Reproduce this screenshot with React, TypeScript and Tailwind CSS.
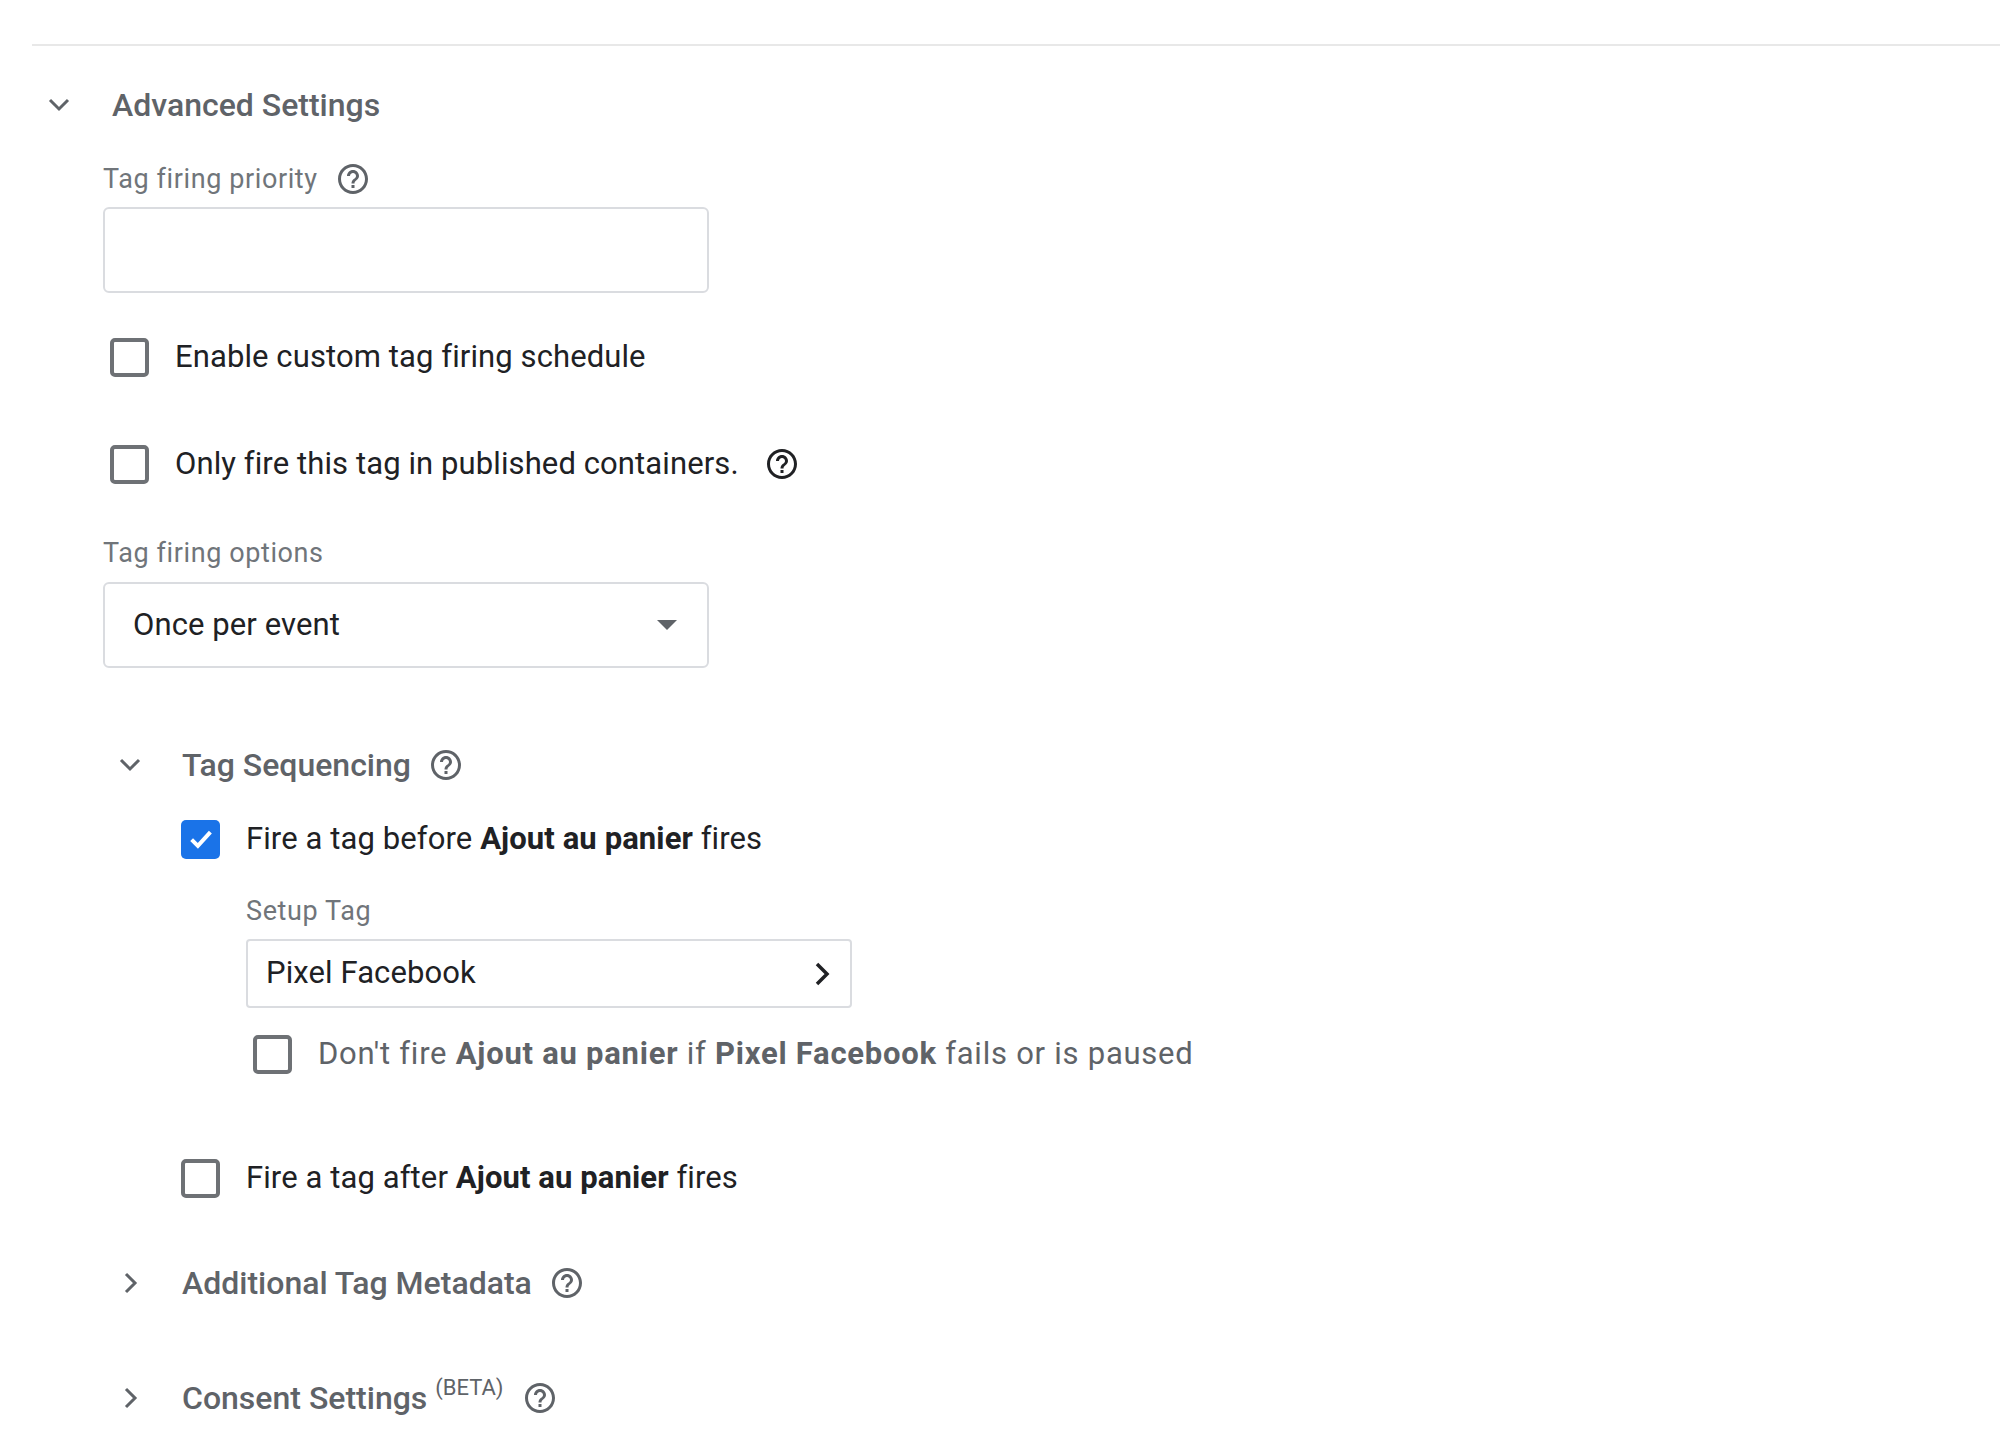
import React from "react";

function HelpIcon({ className = "text-[#5f6368]" }: { className?: string }) {
  return (
    <svg viewBox="0 0 24 24" className={`w-[36px] h-[36px] shrink-0 ${className}`} fill="currentColor">
      <path d="M11 18h2v-2h-2v2zm1-16C6.480 2 2 6.48 2 12s4.48 10 10 10 10-4.48 10-10S17.52 2 12 2zm0 18c-4.41 0-8-3.59-8-8s3.59-8 8-8 8 3.59 8 8-3.59 8-8 8zm0-14c-2.21 0-4 1.79-4 4h2c0-1.1.9-2 2-2s2 .9 2 2c0 2-3 1.75-3 5h2c0-2.25 3-2.5 3-5 0-2.21-1.790-4-4-4z" />
    </svg>
  );
}

function ChevronDown() {
  return (
    <svg viewBox="0 0 22 14" className="w-[22px] h-[14px] shrink-0" fill="none">
      <polyline points="2,2 11,11 20,2" stroke="#5f6368" strokeWidth="3" />
    </svg>
  );
}

function ChevronRight() {
  return (
    <svg viewBox="0 0 14 22" className="w-[14px] h-[22px] shrink-0" fill="none">
      <polyline points="2,2 11,11 2,20" stroke="#5f6368" strokeWidth="3" />
    </svg>
  );
}

function Checkbox({ checked = false }: { checked?: boolean }) {
  if (checked) {
    return (
      <div className="w-[39px] h-[39px] shrink-0 rounded-[5px] bg-[#1a73e8] flex items-center justify-center">
        <svg viewBox="0 0 24 24" className="w-[30px] h-[30px]" fill="none">
          <polyline points="4.5,12.5 9.5,17.5 19.5,6.5" stroke="white" strokeWidth="3.2" />
        </svg>
      </div>
    );
  }
  return <div className="w-[39px] h-[39px] shrink-0 rounded-[5px] border-[4px] border-[#6e7175] bg-white" />;
}

function Label({ children }: { children: React.ReactNode }) {
  return (
    <div className="h-[36px] flex items-center gap-[17px] text-[27px] text-[#70757a] tracking-[0.6px]">
      {children}
    </div>
  );
}

export default function App() {
  return (
    <div className="w-full h-[1449px] overflow-hidden bg-white font-['Roboto',sans-serif] text-[#202124]">
      <div className="ml-[32px] mt-[44px] h-[2px] bg-[#e8e8e8]" />

      {/* Advanced Settings */}
      <div className="mt-[29px] h-[60px] pl-[48px] flex items-center gap-[42px]">
        <ChevronDown />
        <span className="text-[32px] font-medium text-[#5f6368]">Advanced Settings</span>
      </div>

      <div className="pl-[103px] flex flex-col items-start">
        <div className="mt-[26px]">
          <Label>
            <span>Tag firing priority</span>
            <HelpIcon />
          </Label>
        </div>
        <div className="mt-[10px] w-[606px] h-[86px] border-2 border-[#dadce0] rounded-[6px]" />

        <div className="mt-[34px] h-[60px] pl-[7px] flex items-center gap-[26px] text-[31px] tracking-[0.1px]">
          <Checkbox />
          <span>Enable custom tag firing schedule</span>
        </div>

        <div className="mt-[47px] h-[60px] pl-[7px] flex items-center gap-[26px] text-[31px] tracking-[0.1px]">
          <Checkbox />
          <span>Only fire this tag in published containers.</span>
          <HelpIcon className="text-[#202124] ml-[-1px]" />
        </div>

        <div className="mt-[41px]">
          <Label>
            <span>Tag firing options</span>
          </Label>
        </div>
        <div className="mt-[11px] w-[606px] h-[86px] border-2 border-[#dadce0] rounded-[6px] pl-[28px] pr-[30px] flex items-center justify-between">
          <span className="text-[31px] tracking-[0.1px]">Once per event</span>
          <svg viewBox="0 0 20 10" className="w-[20px] h-[10px]" fill="#5f6368">
            <polygon points="0,0 20,0 10,10" />
          </svg>
        </div>

        {/* Tag Sequencing */}
        <div className="mt-[72px] h-[50px] pl-[16px] flex items-center">
          <ChevronDown />
          <span className="ml-[41px] text-[32px] font-medium text-[#5f6368]">Tag Sequencing</span>
          <HelpIcon className="text-[#5f6368] ml-[17px]" />
        </div>

        <div className="ml-[78px] flex flex-col items-start">
          <div className="mt-[29px] h-[40px] flex items-center gap-[26px] text-[31px] tracking-[0.1px]">
            <Checkbox checked />
            <span>
              Fire a tag before <b className="font-bold">Ajout au panier</b> fires
            </span>
          </div>

          <div className="ml-[65px] flex flex-col items-start">
            <div className="mt-[34px]">
              <Label>
                <span>Setup Tag</span>
              </Label>
            </div>
            <div className="mt-[10px] w-[606px] h-[69px] border-2 border-[#dadce0] rounded-[4px] pl-[18px] pr-[20px] flex items-center justify-between">
              <span className="text-[31px] tracking-[0.1px]">Pixel Facebook</span>
              <svg viewBox="0 0 16 26" className="w-[16px] h-[26px]" fill="none">
                <polyline points="3,3 13,13 3,23" stroke="#202124" strokeWidth="3.5" />
              </svg>
            </div>
            <div className="mt-[26px] ml-[7px] h-[40px] flex items-center gap-[26px] text-[31px] text-[#5f6368] tracking-[0.75px]">
              <Checkbox />
              <span>
                Don't fire <b className="font-bold">Ajout au panier</b> if <b className="font-bold">Pixel Facebook</b> fails or is paused
              </span>
            </div>
          </div>

          <div className="mt-[84px] h-[40px] flex items-center gap-[26px] text-[31px] tracking-[0.1px]">
            <Checkbox />
            <span>
              Fire a tag after <b className="font-bold">Ajout au panier</b> fires
            </span>
          </div>
        </div>

        {/* Additional Tag Metadata */}
        <div className="mt-[60px] h-[50px] pl-[21px] flex items-center">
          <ChevronRight />
          <span className="ml-[44px] text-[32px] font-medium text-[#5f6368]">Additional Tag Metadata</span>
          <HelpIcon className="text-[#5f6368] ml-[17px]" />
        </div>

        {/* Consent Settings */}
        <div className="mt-[65px] h-[50px] pl-[21px] flex items-center">
          <ChevronRight />
          <span className="ml-[44px] text-[32px] font-medium text-[#5f6368]">
            Consent Settings{" "}
            <span className="relative top-[-14px] text-[22px] font-normal">(BETA)</span>
          </span>
          <HelpIcon className="text-[#5f6368] ml-[18px]" />
        </div>
      </div>
    </div>
  );
}
